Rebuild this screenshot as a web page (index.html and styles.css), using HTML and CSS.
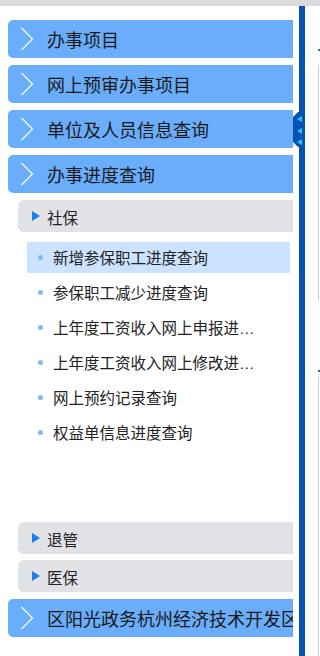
FILE: index.html
```html
<!DOCTYPE html>
<html lang="zh-CN">
<head>
<meta charset="utf-8">
<title>办事进度查询</title>
<link rel="stylesheet" href="styles.css">
</head>
<body>
<div class="topbar"></div>
<div class="main">
  <aside class="sidebar">
    <nav class="nav">
      <div class="item"><svg class="chev" width="14" height="24" viewBox="0 0 14 24"><polyline points="1.5,1 12.5,12 1.5,23"/></svg><span>办事项目</span></div>
      <div class="item"><svg class="chev" width="14" height="24" viewBox="0 0 14 24"><polyline points="1.5,1 12.5,12 1.5,23"/></svg><span>网上预审办事项目</span></div>
      <div class="item"><svg class="chev" width="14" height="24" viewBox="0 0 14 24"><polyline points="1.5,1 12.5,12 1.5,23"/></svg><span>单位及人员信息查询</span></div>
      <div class="item"><svg class="chev" width="14" height="24" viewBox="0 0 14 24"><polyline points="1.5,1 12.5,12 1.5,23"/></svg><span>办事进度查询</span></div>
      <div class="sub">
        <div class="subhead"><svg class="tri" width="8" height="10" viewBox="0 0 8 10"><polygon points="0,0 8,5 0,10"/></svg><span>社保</span></div>
        <ul class="sublist">
          <li class="active">新增参保职工进度查询</li>
          <li>参保职工减少进度查询</li>
          <li>上年度工资收入网上申报进度查询</li>
          <li>上年度工资收入网上修改进度查询</li>
          <li>网上预约记录查询</li>
          <li>权益单信息进度查询</li>
        </ul>
        <div class="subhead"><svg class="tri" width="8" height="10" viewBox="0 0 8 10"><polygon points="0,0 8,5 0,10"/></svg><span>退管</span></div>
        <div class="subhead"><svg class="tri" width="8" height="10" viewBox="0 0 8 10"><polygon points="0,0 8,5 0,10"/></svg><span>医保</span></div>
      </div>
      <div class="item"><svg class="chev" width="14" height="24" viewBox="0 0 14 24"><polyline points="1.5,1 12.5,12 1.5,23"/></svg><span>区阳光政务杭州经济技术开发区</span></div>
    </nav>
  </aside>
  <div class="bar">
    <div class="handle"><svg width="12" height="35" viewBox="0 0 12 35"><polygon points="9,4 4,7 9,10"/><polygon points="9,16 4,19 9,22"/><polygon points="9,27 4,30 9,33"/></svg></div>
  </div>
  <div class="rpanel">
    <div class="mark"></div>
    <div class="box box1"></div>
    <div class="mark"></div>
    <div class="box box2"></div>
  </div>
</div>
</body>
</html>
```
FILE: styles.css
```css
html, body {
  margin: 0;
  padding: 0;
  background: #fff;
}
body {
  width: 320px;
  height: 656px;
  overflow: hidden;
  font-family: "Liberation Sans", "Noto Sans CJK SC", sans-serif;
  color: #1a1a1a;
}
.topbar {
  height: 6px;
  background: #dadada;
}
.main {
  display: flex;
  height: 650px;
}
.sidebar {
  width: 299px;
  flex: none;
  box-sizing: border-box;
  padding: 14px 6px 0 0;
}
.nav {
  width: 293px;
  box-sizing: border-box;
  padding-left: 8px;
  overflow: hidden;
}
.item {
  width: 300px;
  height: 38px;
  margin-bottom: 7px;
  border-radius: 5px;
  background: #69adfb;
  display: flex;
  align-items: center;
  font-size: 18px;
  white-space: nowrap;
}
.chev {
  flex: none;
  margin-left: 12px;
  margin-right: 13px;
}
.chev polyline {
  fill: none;
  stroke: #f4f8ff;
  stroke-width: 1.3;
}
.sub {
  margin-left: 10px;
  margin-bottom: 7px;
}
.subhead {
  width: 300px;
  height: 32px;
  margin-bottom: 6px;
  border-radius: 6px;
  background: #e1e2e5;
  display: flex;
  align-items: center;
  font-size: 15.5px;
  color: #222;
}
.subhead span {
  position: relative;
  top: 1px;
}
.subhead:last-child {
  margin-bottom: 0;
}
.tri {
  flex: none;
  margin-left: 14px;
  margin-right: 7px;
}
.tri polygon {
  fill: #1b7ff0;
}
.sublist {
  list-style: none;
  margin: 10px 0 7px 9px;
  padding: 0;
  height: 273px;
}
.sublist li {
  width: 263px;
  height: 31px;
  line-height: 33px;
  margin-bottom: 4px;
  box-sizing: border-box;
  padding: 0 31px 0 26px;
  font-size: 15.5px;
  color: #222;
  white-space: nowrap;
  overflow: hidden;
  text-overflow: ellipsis;
}
.sublist li::before {
  content: "";
  display: inline-block;
  width: 5px;
  height: 5px;
  border-radius: 50%;
  background: #86b6ee;
  margin-left: -15px;
  margin-right: 10px;
  vertical-align: middle;
  position: relative;
  top: -2px;
}
.sublist li.active {
  background: #cce3ff;
}
.bar {
  width: 6px;
  flex: none;
  background: #0652b4;
  position: relative;
}
.handle {
  position: absolute;
  left: -6px;
  top: 106px;
  width: 12px;
  height: 35px;
  background: #0652b4;
  clip-path: polygon(5px 0, 100% 0, 100% 100%, 5px 100%, 0 calc(100% - 5px), 0 5px);
}
.handle svg {
  display: block;
}
.handle polygon {
  fill: #1ccbf3;
}
.rpanel {
  flex: 1;
  padding: 43px 0 0 13px;
  display: flex;
  flex-direction: column;
}
.mark {
  width: 3px;
  height: 2px;
  background: #1f6fd6;
}
.box {
  border-left: 1px solid #c8c8c8;
}
.box1 {
  margin-top: 14px;
  height: 235px;
  margin-bottom: 70px;
}
.box2 {
  margin-top: 5px;
  flex: 1;
}
```
